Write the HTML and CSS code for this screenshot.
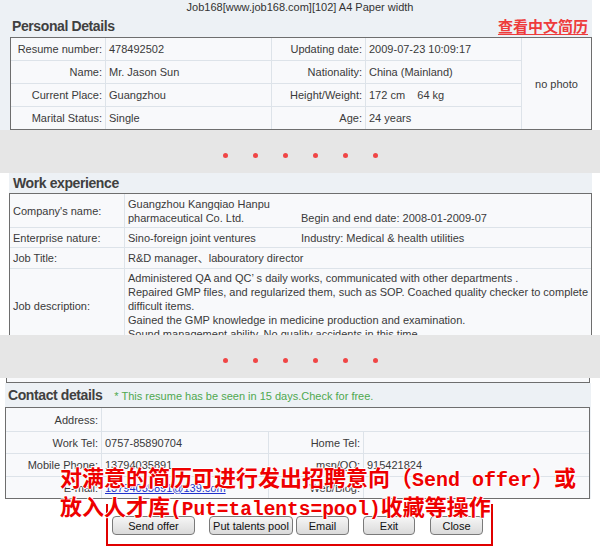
FILE: index.html
```html
<!DOCTYPE html>
<!-- English resume page, A4 layout -->
<html lang="en">
<head>
  <meta charset="UTF-8">
  <meta name="viewport" content="width=device-width, initial-scale=1.0">
  <title>Resume - Job168</title>
  <link rel="stylesheet" href="styles.css">
</head>
<body>
<div class="page">

  <!-- Personal details -->
  <div class="block block-personal">
    <div class="caption">Job168[www.job168.com][102] A4 Paper width</div>
    <div class="block-head">
      <span class="block-title">Personal Details</span>
      <a class="cn-link" href="#">查看中文简历</a>
    </div>
    <div class="grid grid-personal">
      <div class="cell label">Resume number:</div>
      <div class="cell">478492502</div>
      <div class="cell label">Updating date:</div>
      <div class="cell">2009-07-23 10:09:17</div>
      <div class="cell photo">no photo</div>

      <div class="cell label">Name:</div>
      <div class="cell">Mr. Jason Sun</div>
      <div class="cell label">Nationality:</div>
      <div class="cell">China (Mainland)</div>

      <div class="cell label">Current Place:</div>
      <div class="cell">Guangzhou</div>
      <div class="cell label">Height/Weight:</div>
      <div class="cell keep">172 cm    64 kg</div>

      <div class="cell label">Marital Status:</div>
      <div class="cell">Single</div>
      <div class="cell label">Age:</div>
      <div class="cell">24 years</div>
    </div>
  </div>

  <!-- Gap between cuts -->
  <div class="break">
    <span class="dot"></span><span class="dot"></span><span class="dot"></span>
    <span class="dot"></span><span class="dot"></span><span class="dot"></span>
  </div>

  <!-- Work experience -->
  <div class="block block-work">
    <div class="block-head head-work">
      <span class="block-title">Work experience</span>
    </div>
    <div class="grid grid-work">
      <div class="cell">Company's name:</div>
      <div class="cell pair pair-bottom">
        <span class="pair-main">Guangzhou Kangqiao Hanpu pharmaceutical Co. Ltd.</span>
        <span>Begin and end date: 2008-01-2009-07</span>
      </div>

      <div class="cell">Enterprise nature:</div>
      <div class="cell pair">
        <span class="pair-main">Sino-foreign joint ventures</span>
        <span>Industry: Medical &amp; health utilities</span>
      </div>

      <div class="cell">Job Title:</div>
      <div class="cell">R&amp;D manager、labouratory director</div>

      <div class="cell">Job description:</div>
      <div class="cell desc">
        Administered QA and QC’ s daily works, communicated with other departments .<br>
        Repaired GMP files, and regularized them, such as SOP. Coached quality checker to complete difficult items.<br>
        Gained the GMP knowledge in medicine production and examination.<br>
        Sound management ability. No quality accidents in this time.
      </div>
    </div>
  </div>

  <div class="break">
    <span class="dot"></span><span class="dot"></span><span class="dot"></span>
    <span class="dot"></span><span class="dot"></span><span class="dot"></span>
  </div>

  <!-- Contact details -->
  <div class="strip"></div>
  <div class="block block-contact">
    <div class="block-head head-contact">
      <span class="block-title">Contact details</span>
      <span class="notice">* This resume has be seen in 15 days.Check for free.</span>
    </div>
    <div class="grid grid-contact">
      <div class="cell label">Address:</div>
      <div class="cell wide"></div>

      <div class="cell label">Work Tel:</div>
      <div class="cell">0757-85890704</div>
      <div class="cell label">Home Tel:</div>
      <div class="cell"></div>

      <div class="cell label">Mobile Phone:</div>
      <div class="cell">13794035891</div>
      <div class="cell label">msn/QQ:</div>
      <div class="cell">915421824</div>

      <div class="cell label">E-mail:</div>
      <div class="cell"><a class="mail" href="#">13794035891@139.com</a></div>
      <div class="cell label">Web/Blog:</div>
      <div class="cell"></div>
    </div>
  </div>

  <!-- Action buttons -->
  <div class="actions">
    <button class="btn btn-send">Send offer</button>
    <button class="btn btn-pool">Put talents pool</button>
    <button class="btn btn-mail">Email</button>
    <button class="btn btn-exit">Exit</button>
    <button class="btn btn-close">Close</button>
  </div>

  <!-- Red annotation over the form -->
  <div class="bracket"></div>
  <div class="note">
    对满意的简历可进行发出招聘意向（<span class="mono">Send offer</span>）或<br>
    放入人才库<span class="mono mono-sm">(Put=talents=pool)</span>收藏等操作
  </div>

</div>
</body>
</html>
```

FILE: styles.css
```css
/* Page base */
body {
  margin: 0;
  font-family: "Liberation Sans", Arial, "Noto Sans CJK SC", sans-serif;
  font-size: 11px;
  color: #3a3a3a;
  background: #fff;
}

.page {
  position: relative;
  width: 600px;
  height: 550px;
  overflow: hidden;
}

/* Light blue panels */
.block {
  background: #edf1f5;
}

.block-personal {
  width: 592px;
  height: 130px;
}

.block-work {
  margin-left: 9px;
  width: 583px;
  height: 162px;
  overflow: hidden;
}

.block-contact {
  margin-left: 5px;
  width: 586px;
}

.caption {
  height: 14px;
  line-height: 14px;
  padding-left: 8px;
  text-align: center;
  color: #333;
}

/* Section heading row */
.block-head {
  display: flex;
  align-items: center;
  justify-content: space-between;
  height: 23px;
  padding: 0 4px 0 12px;
}

.head-work {
  height: 20px;
  padding-left: 4px;
}

.head-contact {
  height: 24px;
  padding-left: 3px;
  justify-content: flex-start;
  gap: 12px;
}

.block-title {
  font-size: 14px;
  font-weight: bold;
  letter-spacing: -0.4px;
  color: #404040;
}

.cn-link {
  font-family: "Noto Sans CJK SC", sans-serif;
  font-size: 15px;
  font-weight: bold;
  line-height: 17px;
  color: #ee3b3b;
  text-decoration: underline;
  text-underline-offset: 2px;
}

.notice {
  color: #4fa84f;
  padding-top: 2px;
}

/* Tables drawn as grids: gap = grid line */
.grid {
  display: grid;
  gap: 1px;
  background: #dde3e9;
  border: 1px solid #6e6e6e;
  box-sizing: border-box;
}

.grid-personal {
  margin-left: 10px;
  width: 582px;
  grid-template-columns: 94px 165px 93px 155px 69px;
  grid-template-rows: repeat(4, 22px);
}

.grid-work {
  width: 583px;
  grid-template-columns: 114px 466px;
  grid-template-rows: 33px 19px 20px auto;
}

.grid-contact {
  width: 585px;
  grid-template-columns: 95px 166px 94px 225px;
  grid-template-rows: 23px 21px 22px 21px;
}

.cell {
  display: flex;
  align-items: center;
  padding: 0 3px;
  background: #f8f9fb;
  line-height: 14px;
  white-space: nowrap;
}

.label {
  justify-content: flex-end;
}

.keep {
  white-space: pre;
}

.photo {
  grid-column: 5;
  grid-row: 1 / span 4;
  justify-content: center;
}

.wide {
  grid-column: 2 / span 3;
}

/* Two values in one cell */
.pair-main {
  width: 173px;
  flex: none;
  white-space: normal;
}

.pair-bottom {
  align-items: flex-end;
  padding-bottom: 2px;
}

.desc {
  display: block;
  padding: 2px 3px;
  white-space: normal;
}

.mail {
  color: #2233cc;
}

/* Grey gap with red dots */
.break {
  display: flex;
  justify-content: center;
  align-items: flex-start;
  gap: 25px;
  height: 43px;
  padding-top: 23px;
  box-sizing: border-box;
  background: #e6e6e6;
}

.dot {
  width: 5px;
  height: 5px;
  border-radius: 50%;
  background: #f04646;
}

/* Bottom edge of the previous table */
.strip {
  margin-left: 6px;
  width: 584px;
  height: 5px;
  box-sizing: border-box;
  border: 1px solid #6e6e6e;
  border-top: none;
  background: #f8f9fb;
}

/* Buttons */
.actions {
  display: flex;
  padding: 17px 0 0 112px;
}

.btn {
  height: 19px;
  padding: 0;
  font-family: "Liberation Sans", Arial, sans-serif;
  font-size: 11px;
  color: #111;
  background: linear-gradient(#f6f6f6, #dadada);
  border: 1px solid #7a7a7a;
  border-radius: 4px;
}

.btn-send { width: 83px; margin-right: 14px; }
.btn-pool { width: 84px; margin-right: 3px; }
.btn-mail { width: 53px; margin-right: 14px; }
.btn-exit { width: 52px; margin-right: 15px; }
.btn-close { width: 53px; }

/* Red annotation */
.note {
  position: absolute;
  left: 60px;
  top: 464px;
  font-family: "Noto Sans CJK SC", sans-serif;
  font-size: 22px;
  font-weight: bold;
  line-height: 24px;
  color: #ee0000;
  white-space: nowrap;
  text-shadow: 1px 0 #fff, -1px 0 #fff, 0 1px #fff, 0 -1px #fff;
}

.mono {
  font-family: "Liberation Mono", monospace;
  font-size: 20px;
}

.mono-sm {
  font-size: 19.5px;
}

.bracket {
  position: absolute;
  left: 106px;
  top: 504px;
  width: 387px;
  height: 42px;
  box-sizing: border-box;
  border: 2px solid #e00000;
  border-top: none;
}
```
